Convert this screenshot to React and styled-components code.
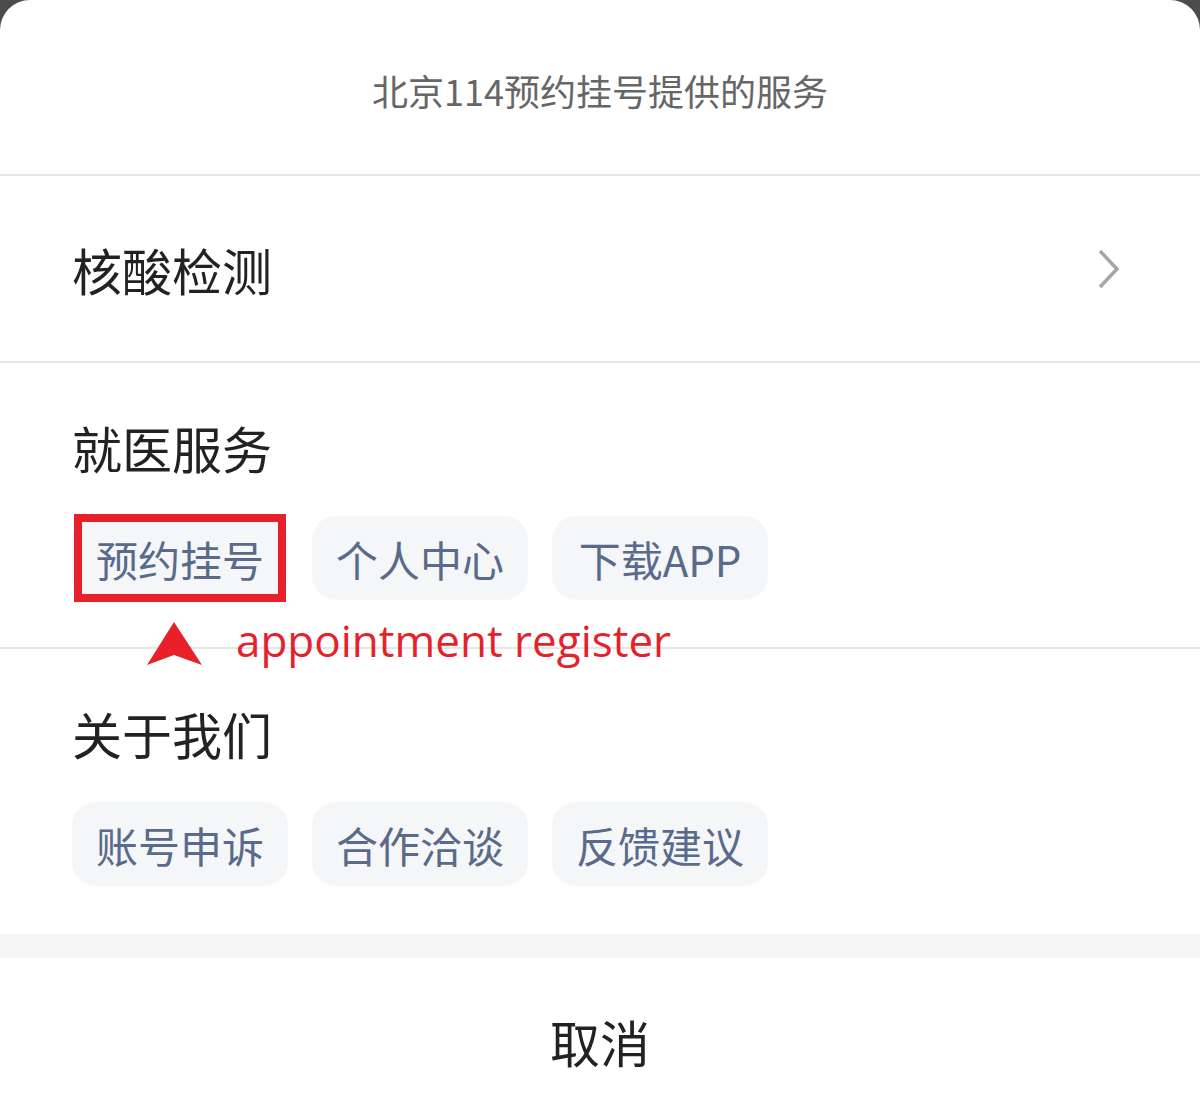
import React from 'react'
import styled, { createGlobalStyle } from 'styled-components'

const Global = createGlobalStyle`
  html, body {
    margin: 0;
    padding: 0;
    background: #4c4c4c;
  }
  body {
    font-family: "Noto Sans CJK SC", "Noto Sans", sans-serif;
  }
`

const Sheet = styled.div`
  width: 1200px;
  height: 1120px;
  background: #fff;
  border-radius: 30px 30px 0 0;
  display: flex;
  flex-direction: column;
  overflow: hidden;
`

const Header = styled.div`
  height: 176px;
  padding-top: 6px;
  box-sizing: border-box;
  display: flex;
  align-items: center;
  justify-content: center;
  font-size: 36px;
  color: #666;
  border-bottom: 2px solid #e6e6e6;
`

const LinkRow = styled.div`
  height: 187px;
  box-sizing: border-box;
  display: flex;
  align-items: center;
  justify-content: space-between;
  padding: 0 78px 0 72px;
  border-bottom: 2px solid #e6e6e6;
`

const BigLabel = styled.div`
  font-size: 50px;
  line-height: 60px;
  color: #222;
`

const Section = styled.div`
  padding: 54px 72px ${p => (p.last ? '48px' : '47px')};
  border-bottom: ${p => (p.last ? 'none' : '2px solid #e6e6e6')};
  display: flex;
  flex-direction: column;
  gap: 39px;
`

const ChipRow = styled.div`
  position: relative;
  display: flex;
  gap: 24px;
`

const Chip = styled.div`
  position: relative;
  height: 84px;
  width: 216px;
  box-sizing: border-box;
  display: flex;
  align-items: center;
  justify-content: center;
  border-radius: 24px;
  background: #f5f6f8;
  color: #5a6a8b;
  font-size: 42px;
`

const Highlight = styled.div`
  position: absolute;
  top: -2px;
  bottom: -2px;
  left: 2px;
  right: 2px;
  border: 8px solid #e8202a;
`

const Note = styled.div`
  position: absolute;
  top: 99px;
  left: 75px;
  display: flex;
  align-items: flex-end;
  gap: 33px;
  color: #e5222b;
  font-family: "Open Sans", "Noto Sans", sans-serif;
  font-size: 44px;
  line-height: 50px;
`

const Band = styled.div`
  height: 24px;
  background: #f5f5f5;
`

const Cancel = styled.div`
  flex: 1;
  display: flex;
  align-items: center;
  justify-content: center;
  padding-top: 4px;
  font-size: 50px;
  color: #222;
`

const services = ['预约挂号', '个人中心', '下载APP']
const about = ['账号申诉', '合作洽谈', '反馈建议']

export default function App() {
  return (
    <>
      <Global />
      <Sheet>
        <Header>北京114预约挂号提供的服务</Header>
        <LinkRow>
          <BigLabel>核酸检测</BigLabel>
          <svg width="26" height="44" viewBox="0 0 26 44">
            <path d="M4 4 L21 22 L4 40" fill="none" stroke="#a6a6a6" strokeWidth="3.5" />
          </svg>
        </LinkRow>
        <Section>
          <BigLabel>就医服务</BigLabel>
          <ChipRow>
            {services.map((s, i) => (
              <Chip key={s}>
                {s}
                {i === 0 && <Highlight />}
              </Chip>
            ))}
            <Note>
              <svg width="56" height="43" viewBox="0 0 56 43">
                <polygon points="27,0 55,43 27,33 0,43" fill="#e8202a" />
              </svg>
              <span>appointment register</span>
            </Note>
          </ChipRow>
        </Section>
        <Section last>
          <BigLabel>关于我们</BigLabel>
          <ChipRow>
            {about.map(s => (
              <Chip key={s}>{s}</Chip>
            ))}
          </ChipRow>
        </Section>
        <Band />
        <Cancel>取消</Cancel>
      </Sheet>
    </>
  )
}
